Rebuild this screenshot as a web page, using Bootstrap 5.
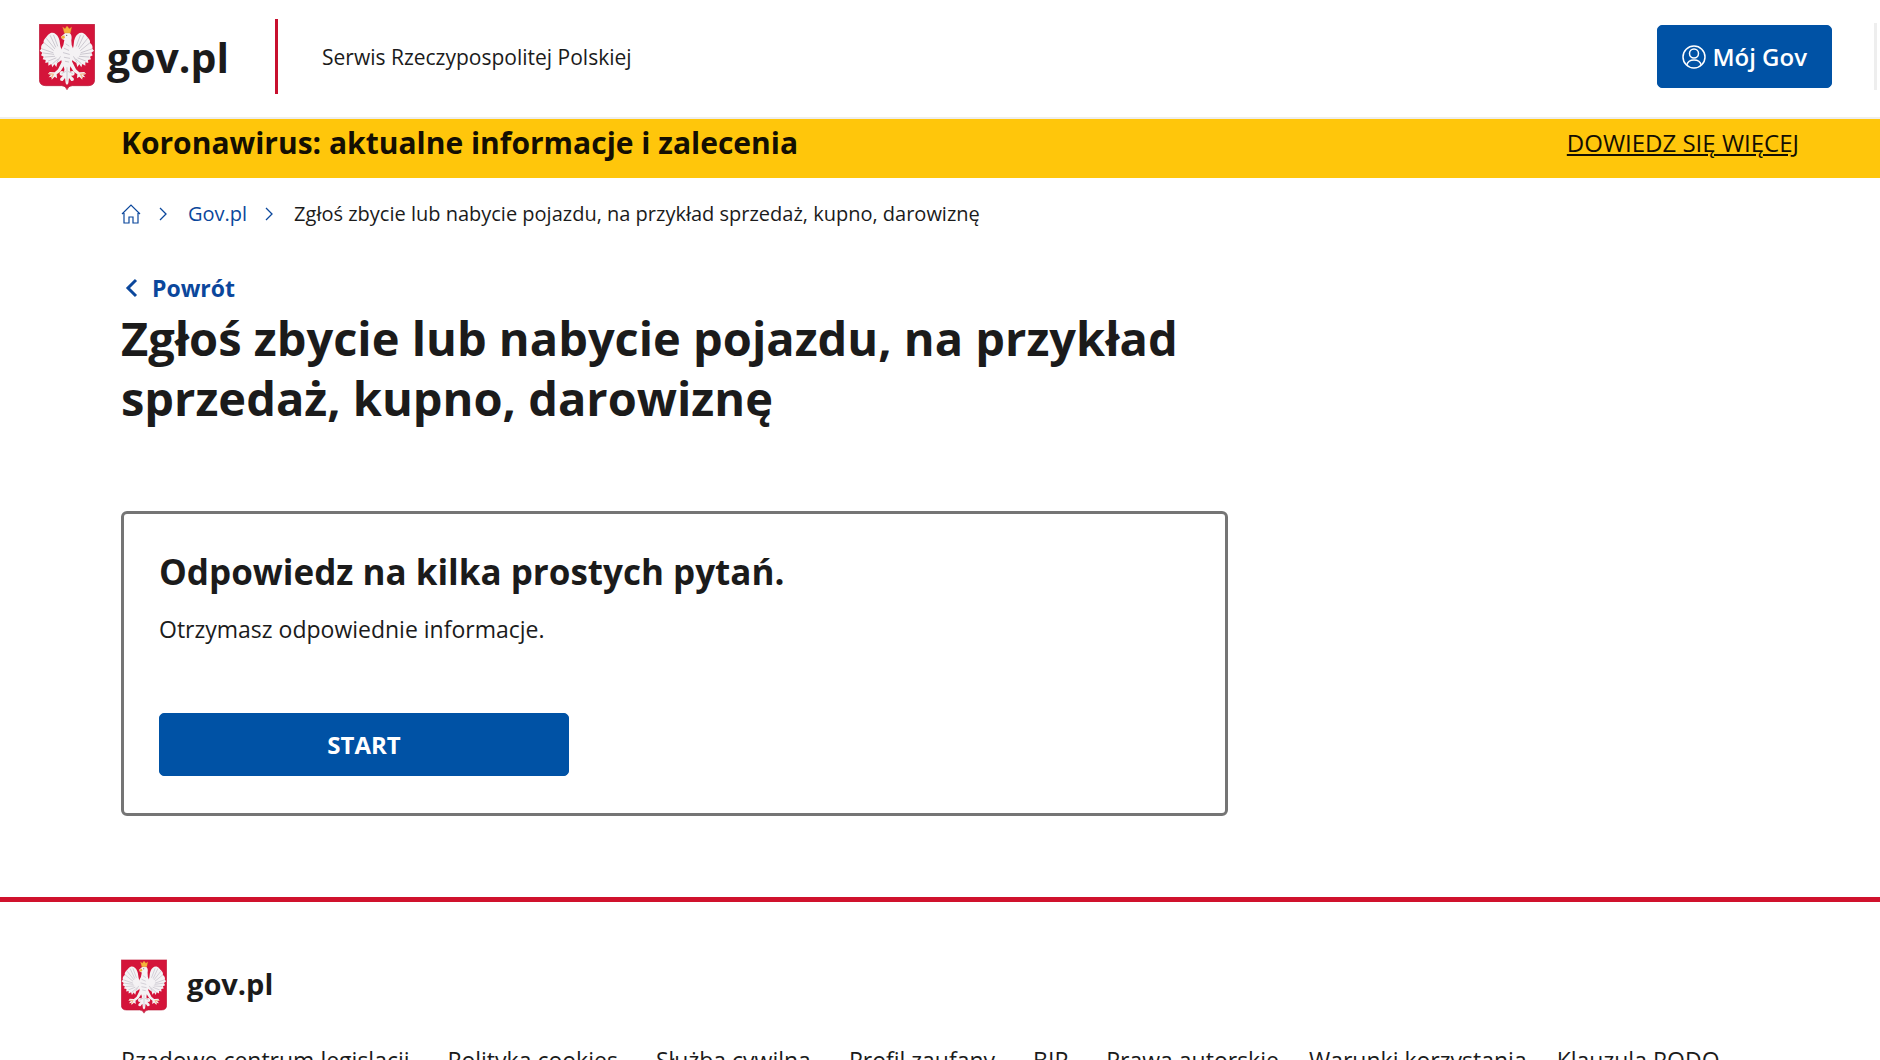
<!DOCTYPE html>
<html lang="pl">
<head>
<meta charset="utf-8">
<meta name="viewport" content="width=device-width, initial-scale=1">
<title>Zgłoś zbycie lub nabycie pojazdu - Gov.pl</title>
<link href="https://cdn.jsdelivr.net/npm/bootstrap@5.3.0/dist/css/bootstrap.min.css" rel="stylesheet">
<style>
  body { font-family: "Open Sans", "Noto Sans", sans-serif; font-size: 23px; line-height: 36px; color: #1b1b1b; background: #fff; }
  a { color: inherit; }
  .gov-header { min-height: 119px; border-bottom: 2px solid #eee; padding: 0 3px 4px 39px; }
  .brand-name { font-size: 41px; line-height: 60px; font-weight: 700; }
  .brand-rule { width: 3px; height: 75px; background: #c8102e; margin: 0 44px 0 46px; }
  .site-title { font-size: 21px; line-height: 30px; }
  .btn-gov { --bs-btn-bg: #0052a5; --bs-btn-color: #fff; --bs-btn-border-color: #0052a5; --bs-btn-hover-bg: #003d7c; --bs-btn-hover-color: #fff; --bs-btn-border-radius: 5px; --bs-btn-font-size: 24px; --bs-btn-line-height: 35px; --bs-btn-padding-y: 13px; --bs-btn-padding-x: 24px; line-height: 35px; }
  .account-btn { gap: 6px; }
  .edge-rule { width: 3px; height: 67px; background: #eee; margin-left: 42px; }
  .wrap-page { padding-left: 121px; padding-right: 81px; }
  .alert-strip { background: #ffc60b; min-height: 59px; color: #140f02; padding-bottom: 12px; }
  .strip-title { font-size: 30px; line-height: 47px; }
  .strip-link { font-size: 24px; }
  .crumbs { --bs-breadcrumb-font-size: 20px; line-height: 30px; padding-top: 21px; }
  .crumb-gap { margin: 0 21px 0 18px; }
  .link-gov { color: #0b479c; }
  .back-link { margin-top: 41px; }
  .back-icon { margin-right: 14px; }
  .lead-col { max-width: 1107px; }
  .page-title { font-size: 47px; line-height: 60px; padding-top: 1px; }
  .start-card { border: 3px solid #757575; border-radius: 6px; margin-top: 83px; padding: 34px 35px 37px; }
  .card-heading { font-size: 35px; line-height: 48px; margin-bottom: 15px; }
  .card-lead { margin-bottom: 66px; }
  .start-btn { width: 410px; max-width: 100%; }
  .gov-footer { border-top: 5px solid #d0122d; margin-top: 81px; padding-top: 57px; padding-bottom: 48px; }
  .footer-brand { font-size: 29px; line-height: 42px; gap: 20px; }
  .footer-name { padding-bottom: 6px; }
  .footer-links { column-gap: 38px; row-gap: 12px; margin-top: 28px; }
  .legal-links { column-gap: 30px; }
</style>
<script src="https://cdn.jsdelivr.net/npm/bootstrap@5.3.0/dist/js/bootstrap.bundle.min.js" defer></script>
</head>
<body>
<svg class="d-none" aria-hidden="true">
  <symbol id="emblem" viewBox="0 0 168 198">
    <path d="M1 1H167V166Q167 185 148 185H100Q88 185 84 197Q80 185 68 185H20Q1 185 1 166Z" fill="#d4143a" stroke="#b51332" stroke-width="2"/>
    <g fill="#f4f2f4">
      <path d="M67 76C62 64 64 52 59 42C54 30 44 24 35 27C27 30 26 36 20 41C14 47 13 51 14 57C7 62 5 68 7 74L2 80L10 86L6 94L14 98L11 106L20 108L19 117L28 115L28 125L37 120L40 130L46 121L52 129L55 117L64 111L73 101Z"/>
      <path d="M101 76C106 64 103 52 108 42C113 30 122 24 132 27C140 30 141 36 147 41C153 47 154 51 153 57C160 62 162 68 160 74L165 80L157 86L161 94L153 98L156 106L147 108L148 117L139 115L139 125L130 120L127 130L121 121L115 129L112 117L103 111L94 101Z"/>
      <path d="M76 29Q84 21 93 28Q100 34 97 49Q96 63 103 76Q108 96 98 115L92 136H77L69 116Q61 96 66 77Q75 65 76 48L69 45L66 38Z"/>
      <path d="M70 110L57 136L47 145L32 144L27 150L36 152L29 160L39 158L38 167L47 158L54 163L53 151L64 143L78 121Z"/>
      <path d="M98 110L111 136L121 145L136 144L141 150L132 152L139 160L129 158L130 167L121 158L114 163L115 151L104 143L90 121Z"/>
      <path d="M78 127H91L94 143Q104 137 107 147Q107 157 96 155L104 163Q107 172 97 171L90 162L88 178L84 183L80 178L78 162L71 171Q61 172 64 163L72 155Q61 157 62 147Q65 137 75 143Z"/>
    </g>
    <g fill="none" stroke="#b8b4be" stroke-width="2" stroke-linecap="round">
      <path d="M16 57L43 79M23 44L47 74M34 35L50 69M44 34L56 66M10 75L42 86M13 87L44 91M18 99L47 97M28 111L51 102M41 119L57 105M54 115L64 98"/>
      <path d="M152 57L125 79M145 44L121 74M134 35L118 69M124 34L112 66M158 75L126 86M155 87L124 91M150 99L121 97M140 111L117 102M127 119L111 105M114 115L104 98"/>
      <path d="M81 60L90 66M76 73L89 79M73 86L91 91M76 100L92 103M79 112L89 114M84 131V171M79 143L69 148M89 143L100 148"/>
    </g>
    <path d="M71 9L78 14L84 6L91 14L98 9L94 27H76Z" fill="#f5b43c" stroke="#dc8b28"/>
    <path d="M76 34L65 39L71 45L78 42Z" fill="#f0ad3c"/>
    <g fill="none" stroke="#f2bb90" stroke-width="4" stroke-linecap="round"><path d="M31 149L43 151L38 161M137 149L125 151L130 161"/></g>
    <circle cx="83" cy="34" r="2" fill="#66505a"/>
  </symbol>
</svg>

<header class="gov-header d-flex align-items-center">
  <a href="#" class="d-flex align-items-center text-decoration-none">
    <svg width="56" height="66" aria-hidden="true"><use href="#emblem"/></svg>
    <span class="brand-name ms-2 ps-1">gov.pl</span>
  </a>
  <span class="brand-rule"></span>
  <span class="site-title">Serwis Rzeczypospolitej Polskiej</span>
  <button type="button" class="btn btn-gov account-btn fw-semibold ms-auto d-flex align-items-center">
    <svg width="24" height="24" viewBox="0 0 24 24" fill="none" stroke="currentColor" stroke-width="1.5" aria-hidden="true"><circle cx="12" cy="12" r="11"/><circle cx="12" cy="8.500" r="4.500"/><path d="M4.800 20Q6 15 12 15T19.200 20"/></svg>
    Mój Gov
  </button>
  <span class="edge-rule"></span>
</header>

<section class="alert-strip wrap-page d-flex justify-content-between align-items-center">
  <h2 class="strip-title fw-bold mb-0">Koronawirus: aktualne informacje i zalecenia</h2>
  <a href="#" class="strip-link">DOWIEDZ SIĘ WIĘCEJ</a>
</section>

<main class="wrap-page">
  <nav aria-label="Okruszki">
    <div class="breadcrumb crumbs align-items-center mb-0">
      <a href="#" class="link-gov d-flex" aria-label="Strona główna"><svg width="20" height="22" viewBox="0 0 20 22" fill="none" stroke="currentColor" stroke-width="1.200" aria-hidden="true"><path d="M1 11L10 2L19 11M3 10V20H8V14H12V20H17V10"/></svg></a>
      <svg class="link-gov crumb-gap" width="8" height="14" viewBox="0 0 8 14" fill="none" stroke="currentColor" stroke-width="1.300" aria-hidden="true"><path d="M1 1L7 7L1 13"/></svg>
      <a href="#" class="link-gov text-decoration-none">Gov.pl</a>
      <svg class="link-gov crumb-gap" width="8" height="14" viewBox="0 0 8 14" fill="none" stroke="currentColor" stroke-width="1.300" aria-hidden="true"><path d="M1 1L7 7L1 13"/></svg>
      <span>Zgłoś zbycie lub nabycie pojazdu, na przykład sprzedaż, kupno, darowiznę</span>
    </div>
  </nav>
  <div class="lead-col">
    <a href="#" class="back-link link-gov fw-bold text-decoration-none d-inline-flex align-items-center ps-1">
      <svg class="back-icon" width="13" height="20" viewBox="0 0 13 20" fill="none" stroke="currentColor" stroke-width="3" aria-hidden="true"><path d="M11 2L3 10L11 18"/></svg>Powrót
    </a>
    <h1 class="page-title fw-bold mb-0">Zgłoś zbycie lub nabycie pojazdu, na przykład sprzedaż, kupno, darowiznę</h1>
    <section class="card start-card">
      <h2 class="card-heading fw-bold">Odpowiedz na kilka prostych pytań.</h2>
      <p class="card-lead">Otrzymasz odpowiednie informacje.</p>
      <button type="button" class="btn btn-gov start-btn fw-bold">START</button>
    </section>
  </div>
</main>

<footer class="gov-footer wrap-page">
  <a href="#" class="footer-brand fw-bold text-decoration-none d-flex align-items-center">
    <svg width="46" height="55" viewBox="0 0 168 198" aria-hidden="true"><use href="#emblem"/></svg>
    <span class="footer-name">gov.pl</span>
  </a>
  <nav class="footer-links d-flex flex-wrap" aria-label="Stopka">
    <a href="#" class="text-decoration-none">Rządowe centrum legislacji</a>
    <a href="#" class="text-decoration-none">Polityka cookies</a>
    <a href="#" class="text-decoration-none">Służba cywilna</a>
    <a href="#" class="text-decoration-none">Profil zaufany</a>
    <a href="#" class="text-decoration-none">BIP</a>
    <div class="legal-links d-flex flex-wrap">
      <a href="#" class="text-decoration-none">Prawa autorskie</a>
      <a href="#" class="text-decoration-none">Warunki korzystania</a>
      <a href="#" class="text-decoration-none">Klauzula RODO</a>
    </div>
  </nav>
</footer>
</body>
</html>
